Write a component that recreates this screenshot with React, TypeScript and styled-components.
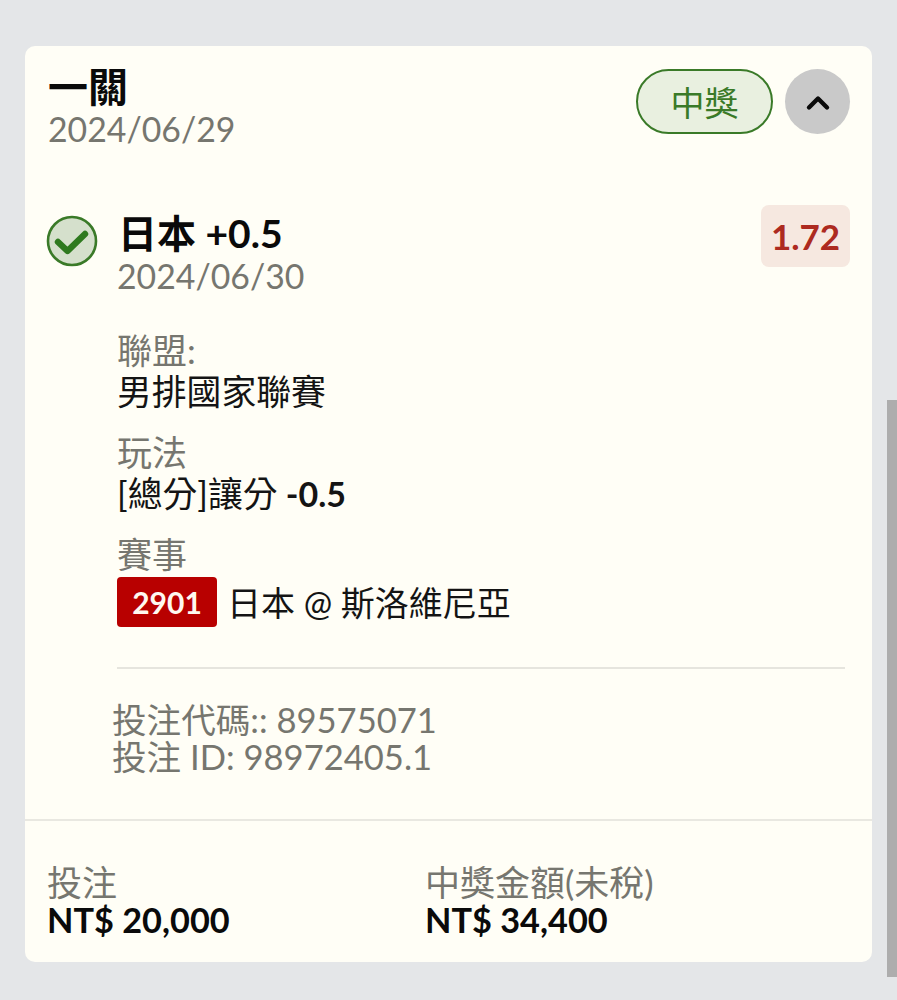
import React from 'react';
import styled, { createGlobalStyle } from 'styled-components';

const GlobalStyle = createGlobalStyle`
  html, body {
    margin: 0;
    padding: 0;
    height: 1000px;
    overflow: hidden;
    background: #e4e6e8;
  }
  * {
    box-sizing: border-box;
  }
  body {
    font-family: Lato, "Noto Sans CJK TC", sans-serif;
  }
`;

const Page = styled.div`
  position: relative;
  width: 897px;
  height: 1000px;
  padding: 46px 25px 38px;
`;

const Scrollbar = styled.div`
  position: absolute;
  top: 400px;
  right: 0;
  width: 10px;
  height: 577px;
  background: #adadad;
`;

const Card = styled.div`
  width: 847px;
  height: 916px;
  background: #fffef6;
  border-radius: 10px;
  display: flex;
  flex-direction: column;
`;

const Header = styled.div`
  display: flex;
  justify-content: space-between;
  padding: 19px 22px 0 23px;
  height: 159px;
`;

const Title = styled.div`
  font-size: 40px;
  line-height: 44px;
  font-weight: 700;
  color: #0a0a0a;
`;

const MutedDate = styled.div`
  font-size: 33.8px;
  line-height: 41px;
  color: #76766f;
`;

const HeaderActions = styled.div`
  display: flex;
  gap: 12px;
  height: 65px;
  margin-top: 4px;
`;

const StatusPill = styled.div`
  width: 137px;
  height: 65px;
  border: 2.5px solid #3a7a28;
  border-radius: 33px;
  background: #e9f0e0;
  color: #3a7a28;
  font-size: 34px;
  display: flex;
  align-items: center;
  justify-content: center;
`;

const ToggleButton = styled.div`
  width: 65px;
  height: 65px;
  border-radius: 50%;
  background: #c9c9c9;
  display: flex;
  align-items: center;
  justify-content: center;
`;

const Selection = styled.div`
  display: flex;
  align-items: flex-start;
  padding: 0 22px 0 21px;
`;

const StatusIcon = styled.svg`
  width: 52px;
  height: 52px;
  margin-top: 10px;
  flex: none;
`;

const SelectionBody = styled.div`
  flex: 1;
  margin-left: 20px;
`;

const SelectionTop = styled.div`
  display: flex;
  justify-content: space-between;
  height: 62px;
`;

const SelectionName = styled.div`
  font-size: 39px;
  line-height: 56px;
  font-weight: 700;
  color: #0a0a0a;
`;

const Odds = styled.div`
  width: 89px;
  height: 62px;
  border-radius: 8px;
  background: #f6e8e0;
  color: #ad2a20;
  font-size: 35px;
  font-weight: 700;
  display: flex;
  align-items: center;
  justify-content: center;
`;

const SelectionDate = styled(MutedDate)`
  line-height: 40px;
  margin-top: -11px;
  margin-left: -1px;
`;

const Field = styled.div<{ $top: number }>`
  margin-top: ${(p) => p.$top}px;
  margin-left: -1px;
`;

const FieldLabel = styled.div`
  font-size: 35px;
  line-height: 41px;
  color: #76766f;
`;

const FieldValue = styled.div`
  font-size: 34.8px;
  line-height: 41px;
  color: #141414;
  display: flex;
  align-items: center;
`;

const EventRow = styled(FieldValue)`
  margin-top: 2px;
  font-size: 34px;
`;

const StrongPart = styled.span`
  font-weight: 700;
  font-size: 34px;
  white-space: pre;
`;

const EventBadge = styled.span`
  width: 100px;
  height: 50px;
  background: #b80000;
  border-radius: 4px;
  color: #fff8f0;
  font-size: 30px;
  font-weight: 700;
  display: inline-flex;
  align-items: center;
  justify-content: center;
  margin-right: 10px;
`;

const Rule = styled.div`
  height: 2px;
  background: #e6e5de;
  margin: 40px 5px 0 -1px;
`;

const Codes = styled.div`
  margin: 32px 0 0 -6px;
  font-size: 34.6px;
  line-height: 37px;
  color: #76766f;
`;

const Footer = styled.div`
  margin-top: auto;
  border-top: 2px solid #e9e8e1;
  height: 143px;
  padding: 43px 0 0 22px;
  display: flex;
`;

const FooterCol = styled.div`
  width: 378px;
`;

const FooterLabel = styled.div`
  font-size: 35px;
  line-height: 37px;
  color: #76766f;
`;

const FooterValue = styled.div`
  font-size: 34.3px;
  line-height: 37px;
  font-weight: 700;
  color: #0a0a0a;
`;

const App: React.FC = () => {
  return (
    <Page>
      <GlobalStyle />
      <Card>
        <Header>
          <div>
            <Title>一關</Title>
            <MutedDate>2024/06/29</MutedDate>
          </div>
          <HeaderActions>
            <StatusPill>中獎</StatusPill>
            <ToggleButton>
              <svg width="26" height="18" viewBox="0 0 26 18" fill="none">
                <path d="M4 14.5 L13 5.5 L22 14.5" stroke="#0a0a0a" strokeWidth="4.4" strokeLinecap="round" strokeLinejoin="round" />
              </svg>
            </ToggleButton>
          </HeaderActions>
        </Header>
        <Selection>
          <StatusIcon viewBox="0 0 52 52" fill="none">
            <circle cx="26" cy="26" r="24" fill="#d5e0cc" stroke="#3a7a28" strokeWidth="2.6" />
            <path d="M12 27 L21.5 36 L39 19" stroke="#2f7a1f" strokeWidth="6.4" strokeLinecap="round" strokeLinejoin="round" />
          </StatusIcon>
          <SelectionBody>
            <SelectionTop>
              <SelectionName>日本 +0.5</SelectionName>
              <Odds>1.72</Odds>
            </SelectionTop>
            <SelectionDate>2024/06/30</SelectionDate>
            <Field $top={34}>
              <FieldLabel>聯盟:</FieldLabel>
              <FieldValue>男排國家聯賽</FieldValue>
            </Field>
            <Field $top={20}>
              <FieldLabel>玩法</FieldLabel>
              <FieldValue>
                [總分]讓分<StrongPart> -0.5</StrongPart>
              </FieldValue>
            </Field>
            <Field $top={20}>
              <FieldLabel>賽事</FieldLabel>
              <EventRow>
                <EventBadge>2901</EventBadge>
                日本 @ 斯洛維尼亞
              </EventRow>
            </Field>
            <Rule />
            <Codes>
              <div>投注代碼:: 89575071</div>
              <div>投注 ID: 98972405.1</div>
            </Codes>
          </SelectionBody>
        </Selection>
        <Footer>
          <FooterCol>
            <FooterLabel>投注</FooterLabel>
            <FooterValue>NT$ 20,000</FooterValue>
          </FooterCol>
          <FooterCol>
            <FooterLabel>中獎金額(未稅)</FooterLabel>
            <FooterValue>NT$ 34,400</FooterValue>
          </FooterCol>
        </Footer>
      </Card>
      <Scrollbar />
    </Page>
  );
};

export default App;
